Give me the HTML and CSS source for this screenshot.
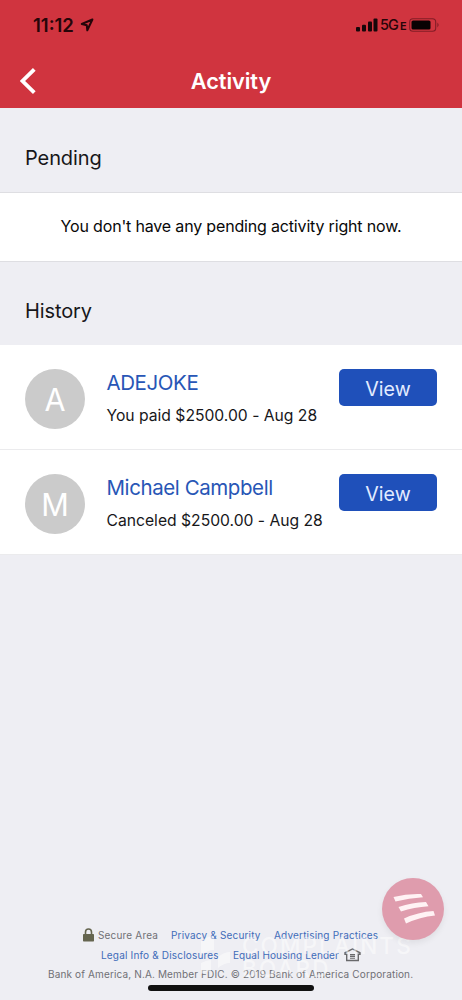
FILE: index.html
```
<!DOCTYPE html>
<html lang="en">
<head>
<meta charset="utf-8">
<title>Activity</title>
<link rel="stylesheet" href="styles.css">
</head>
<body>
<div class="screen">
  <header class="header">
    <div class="status">
      <span class="time">11:12</span>
      <svg class="location" width="14" height="14" viewBox="0 0 14 14"><path d="M12.4 1.5 1.8 6l5 1.3.5 5z" fill="none" stroke="#260509" stroke-width="2" stroke-linejoin="round"/></svg>
      <svg class="signal" width="22" height="14" viewBox="0 0 22 14" fill="#16070a"><rect x="0" y="9" width="4" height="4.5" rx="1"/><rect x="6" y="6.7" width="4" height="6.8" rx="1"/><rect x="12" y="3.5" width="4" height="10" rx="1"/><rect x="17.5" y="0.5" width="4" height="13" rx="1"/></svg>
      <span class="network">5G<small>E</small></span>
      <svg class="battery" width="31" height="14" viewBox="0 0 31 14"><rect x=".7" y=".7" width="26" height="12.6" rx="3.3" fill="none" stroke="#821c26" stroke-width="1.1"/><rect x="2.5" y="2.5" width="19" height="9" rx="1.6" fill="#080203"/><path d="M28.4 4.6q2.4 2.4 0 4.8z" fill="#821c26"/></svg>
    </div>
    <div class="nav">
      <svg class="back" width="18" height="28" viewBox="0 0 18 28"><path d="M14.3 2.3 2.5 14l11.8 11.7" fill="none" stroke="#fff" stroke-width="3.8"/></svg>
      <h1 class="title">Activity</h1>
    </div>
  </header>
  <main>
    <h2 class="section-title">Pending</h2>
    <p class="empty"><span>You don't have any pending activity right now.</span></p>
    <h2 class="section-title history-title">History</h2>
    <ul class="list">
      <li class="row">
        <span class="avatar">A</span>
        <div class="info"><a class="name">ADEJOKE</a><span class="detail">You paid $2500.00 - Aug 28</span></div>
        <button class="view">View</button>
      </li>
      <li class="row">
        <span class="avatar">M</span>
        <div class="info"><a class="name">Michael Campbell</a><span class="detail">Canceled $2500.00 - Aug 28</span></div>
        <button class="view">View</button>
      </li>
    </ul>
  </main>
  <footer class="footer">
    <div class="links">
      <svg class="lock" width="11" height="14" viewBox="0 0 11 14"><path d="M2.5 7V4a3 3 0 0 1 6 0v3" fill="none" stroke="#65654f" stroke-width="1.6"/><rect y="6" width="11" height="7.5" rx=".7" fill="#65654f"/></svg>
      <span class="secure">Secure Area</span><a class="privacy">Privacy &amp; Security</a><a class="advertising">Advertising Practices</a>
    </div>
    <div class="links second">
      <a class="legal">Legal Info &amp; Disclosures</a><a class="housing">Equal Housing Lender</a>
      <svg class="house" width="17" height="14" viewBox="0 0 17 14" fill="none" stroke="#69696b"><path d="M1 6.2V4.8L8.5 1 16 4.8v1.4h-1.7v6.3H2.7V6.2z" stroke-width="1.4"/><path d="M6 6.6h5M6 8.4h5M6 10.2h5" stroke-width="1.1"/></svg>
    </div>
    <div class="copyright">Bank of America, N.A. Member FDIC. © 2019 Bank of America Corporation.</div>
  </footer>
  <div class="watermark">
    <svg width="34" height="46" viewBox="0 0 34 46" fill="#fff"><path d="M2 8q7-5 13-5v14q-6 0-13 5zM19 24q6-5 12-5v11q-6 0-12 5zM2 30q6-3 10-3v11q-5 0-10 3z"/></svg>
    <div class="mark-words"><span class="mark-top">COMPLAINTS</span><span class="mark-bottom">BOARD</span></div>
  </div>
  <div class="home-indicator"></div>
  <div class="assistant"><svg width="62" height="62" viewBox="0 0 62 62" fill="#fff2f4"><path d="M11.500 19Q25 15.500 39 16l2 3.200Q27 20 13.500 23.500zM16.500 29Q30 24.500 44 24l2.500 4.200Q32 29 19 33.500zM22 40.500Q36 34 51.500 33l1.500 4.500Q38 39 24 45.500z"/></svg></div>
</div>
</body>
</html>
```
FILE: styles.css
```
* { box-sizing: border-box; }
body { margin: 0; font-family: Inter, "Liberation Sans", sans-serif; color: #17171a; }
.screen { position: relative; width: 462px; height: 1000px; overflow: hidden; background: #eeeef3; display: flex; flex-direction: column; }
.header { height: 108px; background: #d0343f; flex: none; }
.status { height: 49px; padding: 0 22px 0 33px; display: flex; align-items: center; color: #260509; }
.time { font-size: 18.5px; font-weight: 600; width: 47px; white-space: nowrap; }
.signal { margin-left: auto; }
.network { font-size: 14.5px; letter-spacing: -.9px; margin: 0 2px; width: 27px; white-space: nowrap; font-weight: 500; }
.network small { font-size: 11px; margin-left: 2px; font-weight: 600; }
.nav { height: 59px; padding: 5px 20px 0; display: grid; grid-template-columns: 18px 1fr 18px; align-items: center; }
.title { margin: 0; text-align: center; color: #fff; font-size: 21.8px; font-weight: 600; letter-spacing: -.1px; }
.section-title { height: 84px; margin: 0; padding: 16px 25px 0; font-size: 20px; line-height: 68px; font-weight: 400; letter-spacing: -.1px; }
.empty { height: 70px; margin: 0; padding-bottom: 2px; display: flex; align-items: center; justify-content: center; border: 1px solid #dedee2; border-width: 1px 0; background: #fff; font-size: 16px; letter-spacing: -.17px; white-space: nowrap; color: #080808; }
.history-title { height: 83px; padding-top: 15px; }
.list { margin: 0; padding: 0; list-style: none; background: #fff; }
.row { height: 105px; padding: 24.400px 25px 0; display: flex; align-items: flex-start; border-bottom: 1px solid #ebebed; }
.avatar { width: 60px; height: 60px; border-radius: 50%; background: #cbcbcb; color: #fff; font-size: 30.5px; line-height: 62px; font-weight: 400; text-align: center; flex: none; }
.info { margin-left: 21.500px; padding-top: 1px; width: 232.500px; flex: none; display: flex; flex-direction: column; white-space: nowrap; }
.name { color: #2856b6; font-size: 20.5px; line-height: 26px; letter-spacing: -.42px; }
.detail { font-size: 15.7px; line-height: 24px; margin-top: 7.500px; letter-spacing: -.01px; }
.view { width: 98px; height: 37px; padding: 2px 0 0; border: 0; border-radius: 5px; background: #1f50ba; color: #e2ebff; font: 400 19.6px Inter, sans-serif; }
.footer { margin-top: auto; height: 75px; color: #707075; font-size: 10px; line-height: 20px; letter-spacing: .18px; white-space: nowrap; }
.footer a { color: #416cb9; }
.links { height: 20px; display: flex; align-items: center; padding-left: 83px; }
.secure { margin-left: 4px; width: 73px; }
.privacy { width: 103px; }
.second { padding-left: 101px; }
.legal { width: 132px; }
.housing { width: 111px; letter-spacing: .1px; }
.copyright { padding-left: 48px; line-height: 19px; letter-spacing: .14px; }
.watermark { position: absolute; left: 199px; top: 933px; display: flex; gap: 9px; color: #fff; opacity: .48; }
.mark-words { display: flex; flex-direction: column; font-size: 22.5px; font-weight: 500; line-height: 25px; letter-spacing: 2.1px; }
.mark-bottom { line-height: 21px; }
.home-indicator { position: absolute; left: 148px; top: 985px; width: 166px; height: 6px; border-radius: 3px; background: #111; }
.assistant { position: absolute; left: 382px; top: 878px; width: 62px; height: 62px; border-radius: 50%; background: #df9cad; box-shadow: 0 3px 6px #0001; }
.assistant svg { display: block; }
```
